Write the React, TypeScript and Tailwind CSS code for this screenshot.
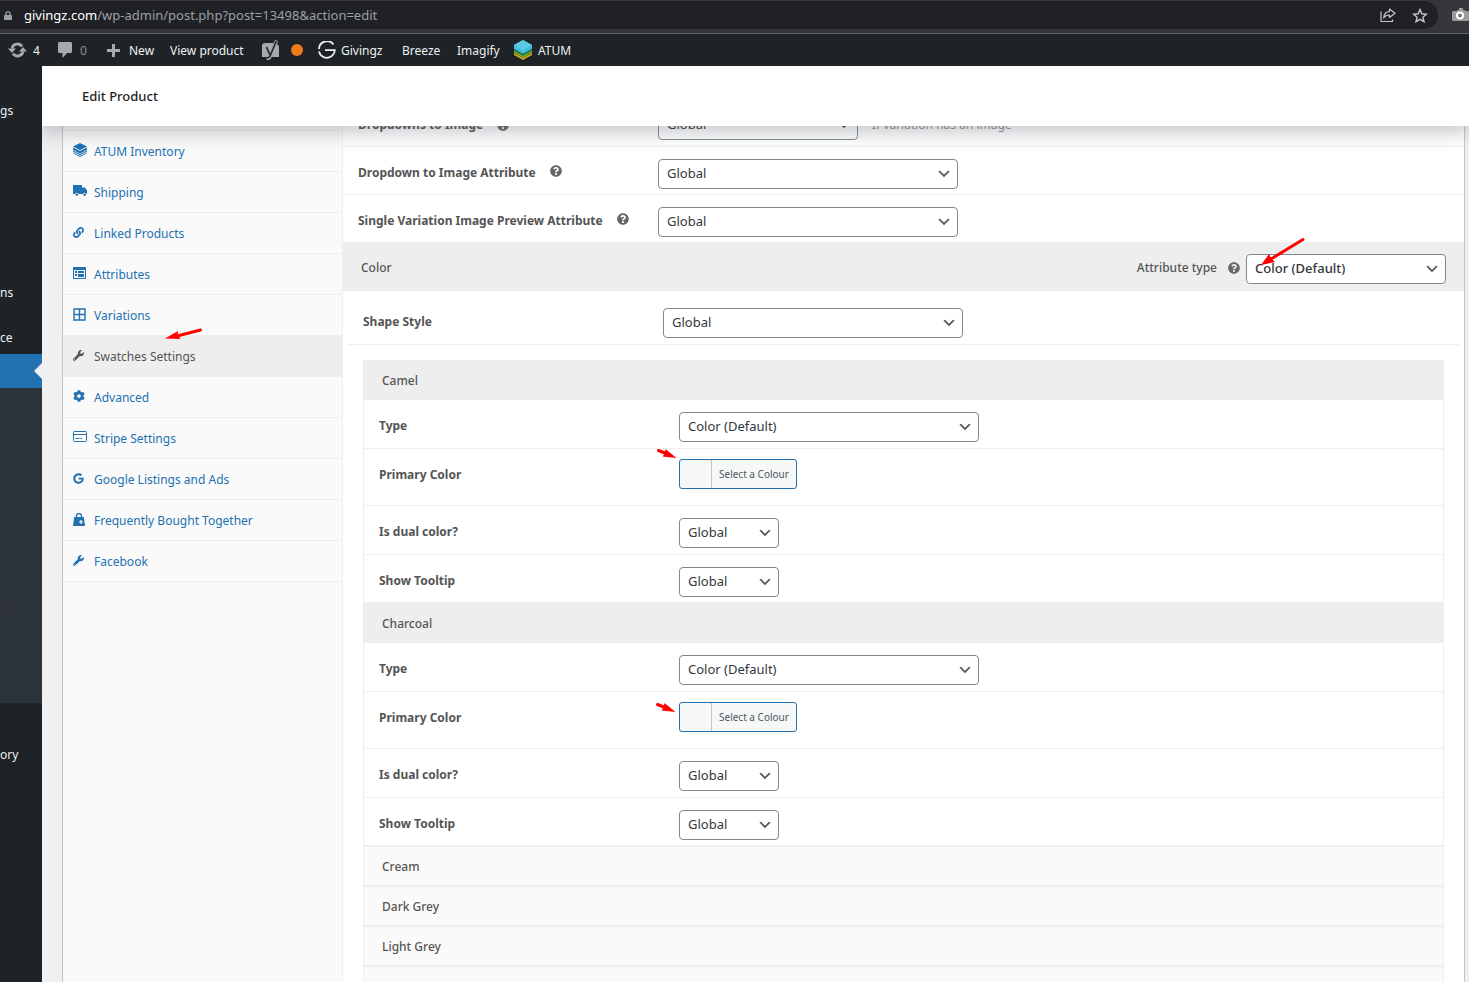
import { useId, type ReactNode } from 'react';
import { FaCog, FaGoogle, FaLink, FaLock, FaQuestionCircle, FaWrench } from 'react-icons/fa';
import { clsx } from 'clsx';

const LayersIcon = () => (
  <svg width="14" height="14" viewBox="0 0 14 14" fill="currentColor">
    <path d="M7 0 14 3.600 7 7.300 0 3.600z" />
    <path d="M0 4.400 7 8.100l7-3.700v2.300L7 10.400 0 6.700zM0 7.400l7 3.700 7-3.700v1.200l-7 3.700-7-3.700zM0 9.400l7 3.500 7-3.500v.9L7 14l-7-3.700z" />
  </svg>
);

const AttributesIcon = () => (
  <svg width="13" height="12" viewBox="0 0 13 12">
    <rect width="13" height="12" rx="0.5" fill="currentColor" />
    <path d="M1 3h11v8H1z" fill="#fafafa" />
    <path d="M2 4h2v2H2zM5 4h6v2H5zM2 7h2v2H2zM5 7h6v3H5z" fill="currentColor" />
  </svg>
);

const VariationsIcon = () => (
  <svg width="13" height="13" viewBox="0 0 13 13" fill="none" stroke="currentColor" strokeWidth="1.4">
    <path d="M1 1h11v11H1zM6.5 1v11M1 6.5h11" />
  </svg>
);

const TruckIcon = () => (
  <svg width="14" height="12" viewBox="0 0 14 12" fill="currentColor">
    <path d="M0 0h9v2.500h3l2 3V9h-.8a1.700 1.700 0 0 0-3.200 0H5.400a1.700 1.700 0 0 0-3.200 0H0z" />
    <circle cx="3.800" cy="9.800" r="1.200" />
    <circle cx="11.600" cy="9.800" r="1.200" />
  </svg>
);

const CardIcon = () => (
  <svg width="14" height="12" viewBox="0 0 14 12" fill="none" stroke="currentColor">
    <rect x="0.5" y="0.5" width="13" height="10" rx="1" />
    <path d="M.5 3.5h13" />
    <path d="M2.5 7.5h4M7.5 7.5h1.5" />
  </svg>
);

const BagIcon = () => (
  <svg width="12" height="13" viewBox="0 0 12 13">
    <path d="M3.5 5V3a2.5 2.5 0 0 1 5 0v2" fill="none" stroke="currentColor" strokeWidth="1.3" />
    <path d="M1.2 4h9.6L12 13H0z" fill="currentColor" />
    <path d="M8 7v4M6 9h4" stroke="#fafafa" strokeWidth="1.2" />
  </svg>
);

const tabs = [
  { name: 'ATUM Inventory', icon: <LayersIcon /> },
  { name: 'Shipping', icon: <TruckIcon /> },
  { name: 'Linked Products', icon: <FaLink size={11} /> },
  { name: 'Attributes', icon: <AttributesIcon /> },
  { name: 'Variations', icon: <VariationsIcon /> },
  { name: 'Swatches Settings', icon: <FaWrench size={11} />, active: true },
  { name: 'Advanced', icon: <FaCog size={12} /> },
  { name: 'Stripe Settings', icon: <CardIcon /> },
  { name: 'Google Listings and Ads', icon: <FaGoogle size={11} /> },
  { name: 'Frequently Bought Together', icon: <BagIcon /> },
  { name: 'Facebook', icon: <FaWrench size={11} /> },
];

const swatches = [
  { name: 'Camel', arrow: '-left-[22px] -top-[11px]' },
  { name: 'Charcoal', arrow: '-left-[23px] top-0' },
];

const closedSwatches = ['Cream', 'Dark Grey', 'Light Grey'];

function HelpTip() {
  return <FaQuestionCircle size={12} className="shrink-0 text-[#666]" />;
}

function Select({ id, value, className }: { id: string; value: string; className: string }) {
  return (
    <div className={clsx('relative mt-[2px] shrink-0', className)}>
      <select
        id={id}
        defaultValue={value}
        className="block h-[30px] w-full appearance-none rounded-[4px] border border-[#7e8993] bg-white pl-2 pr-6 text-[13px] text-[#32373c]"
      >
        <option>{value}</option>
      </select>
      <svg className="pointer-events-none absolute right-[6px] top-[7px]" width="16" height="16" viewBox="0 0 20 20">
        <path d="M5 6l5 5 5-5 2 1-7 7-7-7 2-1z" fill="#555" />
      </svg>
    </div>
  );
}

type RowProps = {
  label: string;
  help?: boolean;
  height?: string;
  children: (id: string) => ReactNode;
};

function Row({ label, help, height = 'h-[49px]', children }: RowProps) {
  const id = useId();
  return (
    <div className={clsx('flex items-start border-b border-[#eee] pl-[15px] pt-[10px]', height)}>
      <div className="flex w-[300px] shrink-0 items-center gap-[14px]">
        <label htmlFor={id} className="text-xs font-bold leading-8 text-[#555]">
          {label}
        </label>
        {help && (
          <span className="pb-1">
            <HelpTip />
          </span>
        )}
      </div>
      {children(id)}
    </div>
  );
}

function SmallArrow({ className }: { className: string }) {
  return (
    <svg className={clsx('absolute', className)} width="20" height="12" viewBox="0 0 20 12">
      <path d="M1.5 2.5 9 5.5" stroke="#f00" strokeWidth="3" strokeLinecap="round" />
      <path d="M19.5 10 5.5 8.5 7.5 6 8.5 1z" fill="#f00" />
    </svg>
  );
}

function SwatchPanel({ name, arrow }: { name: string; arrow: string }) {
  return (
    <section>
      <h3 className="flex h-10 items-center bg-[#eee] pl-[18px] pt-[2px] text-xs font-medium text-[#555]">{name}</h3>
      <Row label="Type">{(id) => <Select id={id} value="Color (Default)" className="w-[300px]" />}</Row>
      <Row label="Primary Color" height="h-[57px]">
        {(id) => (
          <div className="relative">
            <button
              id={id}
              type="button"
              className="flex h-[30px] items-stretch overflow-hidden rounded-[3px] border border-[#2271b1] bg-[#f6f7f7] text-[10px] text-[#50575e]"
            >
              <span className="w-8 border-r border-[#c3c4c7]" />
              <span className="px-[7px] leading-7">Select a Colour</span>
            </button>
            <SmallArrow className={arrow} />
          </div>
        )}
      </Row>
      <Row label="Is dual color?">{(id) => <Select id={id} value="Global" className="w-[100px]" />}</Row>
      <Row label="Show Tooltip" height="h-12">
        {(id) => <Select id={id} value="Global" className="w-[100px]" />}
      </Row>
    </section>
  );
}

function BrowserBar() {
  return (
    <div className="flex h-[34px] shrink-0 items-start justify-between border-b border-[#606164] bg-[#35363a] pt-px">
      <div className="flex h-7 flex-1 items-center justify-between rounded-r-full bg-[#202124] pl-1 pr-[10px]">
        <div className="flex items-center gap-3">
          <FaLock size={11} className="w-2 text-[#9aa0a6]" />
          <span className="pt-[2px] text-[13px] text-[#9aa0a6]">
            <span className="text-white">givingz.com</span>/wp-admin/post.php?post=13498&amp;action=edit
          </span>
        </div>
        <div className="flex items-center gap-4 text-[#c4c7c5]">
          <svg width="16" height="14" viewBox="0 0 16 14" fill="none" stroke="currentColor" strokeWidth="1.2">
            <path d="M1 3.5v10h11.5v-2" />
            <path d="M9.5 1 15 5.2 9.5 9.4V7C7 7 5 7.800 3.700 10 4 6 6 3.700 9.500 3.400z" strokeLinejoin="round" />
          </svg>
          <svg width="16" height="15" viewBox="0 0 16 15" fill="none" stroke="currentColor" strokeWidth="1.4">
            <path d="m8 1.500 1.800 4.300 4.600.4-3.500 3 1.100 4.500L8 11.300l-4 2.400 1.100-4.500-3.500-3 4.600-.4z" />
          </svg>
        </div>
      </div>
      <div className="flex h-7 w-[31px] items-center justify-end">
        <svg width="17" height="14" viewBox="0 0 17 14">
          <path d="M1 3h4V2h2V0h4v2h2v1h3l1 1v8l-1 1H1l-1-1V4z" fill="#9b9b9b" />
          <circle cx="8" cy="7.500" r="3" fill="#777" stroke="#fff" strokeWidth="2" />
        </svg>
      </div>
    </div>
  );
}

function AdminBar() {
  return (
    <nav className="flex h-8 shrink-0 items-center bg-[#1d2327] pl-2 text-xs leading-[18px] text-[#f0f0f1]">
      <a href="#updates" className="flex w-[50px] items-center gap-[6px]">
        <svg width="19" height="16" viewBox="0 0 19 16" fill="none" stroke="#a7aaad" strokeWidth="2.800">
          <path d="M4 6.500a5.500 5.500 0 0 1 10-2M15 9.500a5.500 5.500 0 0 1-10 2" />
          <path d="M0 6.500h8L4 11zM11 9.500h8L15 5z" fill="#a7aaad" stroke="none" />
        </svg>
        <span className="pt-[2px]">4</span>
      </a>
      <a href="#comments" className="flex w-[49px] items-center gap-2 text-[#8c8f94]">
        <svg width="14" height="16" viewBox="0 0 14 16" fill="#a7aaad">
          <path d="M1 0h12l1 1v9l-1 1H9l-4.500 5V11H1l-1-1V1z" />
        </svg>
        <span className="pt-[2px]">0</span>
      </a>
      <a href="#new" className="flex w-[63px] items-center gap-[9px]">
        <svg width="13" height="13" viewBox="0 0 13 13" fill="#a7aaad">
          <path d="M5 0h3v5h5v3H8v5H5V8H0V5h5z" />
        </svg>
        <span className="pt-[2px]">New</span>
      </a>
      <a href="#view" className="w-[92px] pt-[2px]">View product</a>
      <a href="#seo" className="flex w-14 items-center gap-[11px]">
        <svg width="18" height="20" viewBox="0 0 18 20" fill="none">
          <path d="M3 3h9L7.500 17H0V6a3 3 0 0 1 3-3z" fill="#a7aaad" />
          <path d="M14.500 4c2 .5 2.500 1.500 2.500 3v10H9z" fill="#a7aaad" />
          <path d="m4 7 3.500 8M14.500.5 8.500 16c-.8 2-1.800 2.900-4 3" stroke="#a7aaad" strokeWidth="3.400" />
          <path d="m4.500 7 3.200 7.500M14.300 1 8.500 15c-.8 2-1.800 3-4 3" stroke="#1d2327" strokeWidth="1.600" />
        </svg>
        <span className="h-3 w-3 rounded-full bg-[#ee7c1b]" />
      </a>
      <a href="#givingz" className="flex w-[84px] items-center gap-[5px]">
        <svg width="18" height="18" viewBox="0 0 18 18" fill="none" stroke="#f0f0f1" strokeWidth="1.800">
          <path d="M15.500 3.500A8 8 0 0 0 1 8M1 10.500a8 8 0 0 0 15.800-1.300H7" />
        </svg>
        <span className="pt-[2px]">Givingz</span>
      </a>
      <a href="#breeze" className="w-[55px] pt-[2px]">Breeze</a>
      <a href="#imagify" className="w-[57px] pt-[2px]">Imagify</a>
      <a href="#atum" className="flex items-center gap-[6px]">
        <svg width="18" height="20" viewBox="0 0 18 20">
          <path d="m0 13 9 5 9-5v2l-9 5-9-5z" fill="#e0a21b" />
          <path d="m0 10 9 5 9-5v2.500L9 18l-9-5.500z" fill="#6cb52d" />
          <path d="m0 9.500 9 5 9-5v1.200L9 16l-9-5.300z" fill="#3c7d2a" />
          <path d="m9 0 9 5v4l-9 5-9-5V5z" fill="#3cc0dc" />
          <path d="m9 0 9 5-9 5-9-5z" fill="#5ccbe2" />
        </svg>
        <span className="pt-[2px]">ATUM</span>
      </a>
    </nav>
  );
}

function AdminMenu() {
  return (
    <aside className="z-20 w-[42px] shrink-0 bg-[#1d2327] pt-7 text-xs text-[#f0f0f1]">
      <a href="#listings" className="mb-[148px] block leading-[34px]">gs</a>
      <a href="#coupons" className="mb-[11px] block leading-[34px]">ns</a>
      <a href="#woocommerce" className="block leading-[33px]">ce</a>
      <div className="flex h-[34px] items-center justify-end bg-[#2271b1]">
        <svg width="8" height="16" viewBox="0 0 8 16">
          <path d="M8 0v16L0 8z" fill="#f0f0f1" />
        </svg>
      </div>
      <div className="h-[315px] bg-[#2c3338] pt-[216px]">
        <svg width="2" height="8" viewBox="0 0 2 8" fill="#8b2a2c">
          <path d="M0 0h1v1H0zM0 7h1v1H0z" />
        </svg>
      </div>
      <a href="#history" className="mt-[35px] block leading-[34px]">ory</a>
    </aside>
  );
}

export default function App() {
  return (
    <div className="flex h-screen flex-col overflow-hidden bg-[#f0f0f1] font-['Noto_Sans','Open_Sans',sans-serif]">
      <BrowserBar />
      <AdminBar />

      <div className="flex min-h-0 flex-1">
        <AdminMenu />

        <div className="flex min-w-0 flex-1 flex-col">
          <header className="z-10 flex h-[60px] shrink-0 items-center bg-white pl-10 pt-[2px] shadow-[0_8px_16px_0_rgba(85,93,102,0.3)]">
            <h1 className="text-[13px] font-medium text-[#1e1e1e]">Edit Product</h1>
          </header>

          <main className="flex min-h-0 flex-1 pl-5 pr-1">
            <div className="flex min-w-0 flex-1 border-x border-[#c3c4c7] bg-white">
              {/* Product data tabs */}
              <ul className="w-[280px] shrink-0 border-r border-[#eee] bg-[#fafafa] text-xs">
                <li className="h-[5px] border-b border-[#eee]" />
                {tabs.map((tab) => (
                  <li key={tab.name} className="relative">
                    <a
                      href="#tab"
                      className={clsx(
                        'flex h-[41px] items-center border-b border-[#eee] pl-[10px] pt-[2px]',
                        tab.active ? 'bg-[#eee] text-[#555]' : 'text-[#2271b1]'
                      )}
                    >
                      <span className="flex w-[21px] pb-1">{tab.icon}</span>
                      {tab.name}
                    </a>
                    {tab.active && (
                      <svg className="absolute -top-2 left-[102px]" width="38" height="14" viewBox="0 0 38 14">
                        <path d="M12 8 35.500 2" stroke="#f00" strokeWidth="3" strokeLinecap="round" />
                        <path d="M0 10.500 13 3l-.5 4 3 4z" fill="#f00" />
                      </svg>
                    )}
                  </li>
                ))}
              </ul>

              {/* Swatches settings */}
              <div className="min-w-0 flex-1 overflow-hidden">
                <div className="flex h-[21px] items-end overflow-hidden border-b border-[#eee] pb-[6px] pl-[15px]">
                  <div className="flex w-[300px] shrink-0 items-center gap-[14px] pb-[3px]">
                    <label htmlFor="dropdowns-to-image" className="text-xs font-bold leading-6 text-[#555]">
                      Dropdowns to Image
                    </label>
                    <HelpTip />
                  </div>
                  <Select id="dropdowns-to-image" value="Global" className="w-[200px]" />
                  <span className="pb-[3px] pl-[14px] text-xs leading-6 text-[#8c8f94]">If variation has an image</span>
                </div>
                <Row label="Dropdown to Image Attribute" help height="h-12">
                  {(id) => <Select id={id} value="Global" className="w-[300px]" />}
                </Row>
                <Row label="Single Variation Image Preview Attribute" help height="h-12">
                  {(id) => <Select id={id} value="Global" className="w-[300px]" />}
                </Row>

                <div className="flex h-12 items-center justify-between bg-[#eee] px-[18px] pt-[2px]">
                  <h2 className="text-xs font-medium text-[#555]">Color</h2>
                  <div className="relative flex items-center">
                    <label htmlFor="attribute-type" className="pr-[11px] text-xs font-medium text-[#555]">
                      Attribute type
                    </label>
                    <HelpTip />
                    <Select id="attribute-type" value="Color (Default)" className="ml-[6px] w-[200px] font-medium" />
                    <svg className="absolute -top-[15px] right-[141px]" width="44" height="30" viewBox="0 0 44 30">
                      <path d="M10 22 42 2.500" stroke="#f00" strokeWidth="3" strokeLinecap="round" />
                      <path d="M0 28 8 17l2 4 4 4z" fill="#f00" />
                    </svg>
                  </div>
                </div>

                <div className="px-[5px] pt-[5px]">
                  <Row label="Shape Style">{(id) => <Select id={id} value="Global" className="w-[300px]" />}</Row>
                </div>

                <div className="px-5 pt-[15px]">
                  <div className="border-x border-[#eee]">
                    {swatches.map((swatch) => (
                      <SwatchPanel key={swatch.name} name={swatch.name} arrow={swatch.arrow} />
                    ))}
                    {closedSwatches.map((name) => (
                      <h3
                        key={name}
                        className="flex h-10 items-center border-y border-[#eee] bg-[#fafafa] pl-[18px] pt-[2px] text-xs font-medium text-[#555]"
                      >
                        {name}
                      </h3>
                    ))}
                    <div className="h-10 border-y border-[#eee] bg-[#fafafa]" />
                  </div>
                </div>
              </div>
            </div>
          </main>
        </div>
      </div>
    </div>
  );
}
